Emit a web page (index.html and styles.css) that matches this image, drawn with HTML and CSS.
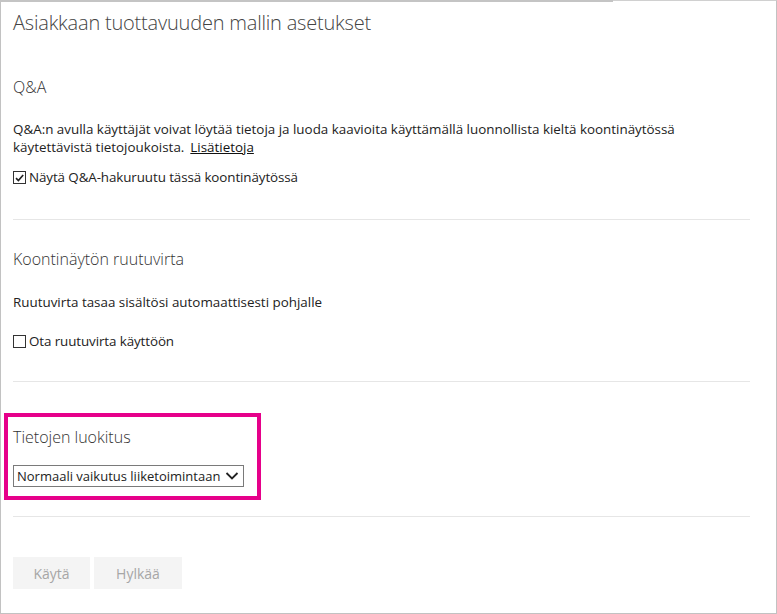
FILE: index.html
```html
<!DOCTYPE html>
<html lang="fi">
<head>
<meta charset="utf-8">
<title>Asetukset</title>
<link rel="stylesheet" href="styles.css">
</head>
<body>
<div class="panel">
  <h1 class="title">Asiakkaan tuottavuuden mallin asetukset</h1>

  <section class="section qa">
    <h2 class="heading">Q&amp;A</h2>
    <p class="text">Q&amp;A:n avulla käyttäjät voivat löytää tietoja ja luoda kaavioita käyttämällä luonnollista kieltä koontinäytössä<br>käytettävistä tietojoukoista.<a class="link" href="#">Lisätietoja</a></p>
    <label class="check">
      <span class="box checked">
        <svg viewBox="0 0 12 12" width="12" height="12"><path d="M2.2 6.2 L4.8 8.8 L10 2.8" fill="none" stroke="#222" stroke-width="1.8"/></svg>
      </span>
      <span>Näytä Q&amp;A-hakuruutu tässä koontinäytössä</span>
    </label>
  </section>

  <section class="section flow">
    <h2 class="heading">Koontinäytön ruutuvirta</h2>
    <p class="text single">Ruutuvirta tasaa sisältösi automaattisesti pohjalle</p>
    <label class="check check-flow">
      <span class="box"></span>
      <span>Ota ruutuvirta käyttöön</span>
    </label>
  </section>

  <section class="section classify">
    <div class="highlight">
      <h2 class="heading">Tietojen luokitus</h2>
      <div class="select">
        <span class="select-value">Normaali vaikutus liiketoimintaan</span>
        <svg class="chev" viewBox="0 0 14 10" width="14" height="10"><path d="M1.5 2 L7 7.5 L12.5 2" fill="none" stroke="#222" stroke-width="1.8"/></svg>
      </div>
    </div>
  </section>

  <div class="actions">
    <button class="btn btn-apply">Käytä</button>
    <button class="btn btn-cancel">Hylkää</button>
  </div>
</div>
</body>
</html>
```
FILE: styles.css
```css
html, body {
  margin: 0;
  padding: 0;
  background: #ffffff;
}
body {
  font-family: "Open Sans", "Noto Sans", sans-serif;
  color: #222;
}
.panel {
  position: relative;
  box-sizing: border-box;
  width: 777px;
  height: 614px;
  border: 1px solid #c2c2c2;
  border-top-color: #d0d0d0;
  padding: 0 26px 0 12px;
}
.panel::before {
  content: "";
  position: absolute;
  left: -1px;
  top: -1px;
  width: 613px;
  height: 2px;
  background: #c4c4c4;
}
.title {
  margin: 0;
  padding-top: 8px;
  font-size: 20px;
  font-weight: 300;
  line-height: 28px;
  color: #444;
  letter-spacing: -0.2px;
}
.section {
  border-bottom: 1px solid #e6e6e6;
}
.heading {
  margin: 0;
  font-size: 16px;
  font-weight: 300;
  line-height: 22px;
  color: #333;
}
.qa {
  padding-top: 39px;
  padding-bottom: 33px;
}
.text {
  margin: 22px 0 0;
  font-size: 13.4px;
  line-height: 18px;
  white-space: nowrap;
}
.single {
  margin-top: 23px;
}
.link {
  display: inline-block;
  margin-left: 6px;
  color: #111;
  text-decoration: underline;
}
.check {
  display: flex;
  align-items: center;
  gap: 3px;
  margin-top: 13px;
  font-size: 13.4px;
  line-height: 17px;
  letter-spacing: -0.1px;
}
.check-flow {
  margin-top: 22px;
}
.box {
  box-sizing: border-box;
  width: 13px;
  height: 13px;
  border: 1px solid #333;
  display: flex;
  align-items: center;
  justify-content: center;
  background: #fff;
}
.box svg {
  display: block;
}
.flow {
  padding-top: 28px;
  padding-bottom: 31px;
}
.classify {
  padding-top: 31px;
  padding-bottom: 16px;
}
.highlight {
  box-sizing: border-box;
  margin-left: -9px;
  width: 257px;
  border: 4px solid #e6008a;
  padding: 9px 0 9px 5px;
}
.select {
  margin-top: 17px;
  box-sizing: border-box;
  width: 231px;
  height: 22px;
  border: 1px solid #7a7a7a;
  display: flex;
  align-items: center;
  justify-content: space-between;
  padding: 0 4px 0 3px;
  font-size: 13px;
  white-space: nowrap;
}
.select-value {
  white-space: nowrap;
}
.chev {
  display: block;
  flex: none;
}
.actions {
  display: flex;
  gap: 4px;
  margin-top: 40px;
}
.btn {
  font-family: inherit;
  height: 32px;
  border: none;
  background: #f4f4f4;
  color: #a6a6a6;
  font-size: 14px;
  padding: 0;
}
.btn-apply {
  width: 77px;
}
.btn-cancel {
  width: 88px;
}
```
